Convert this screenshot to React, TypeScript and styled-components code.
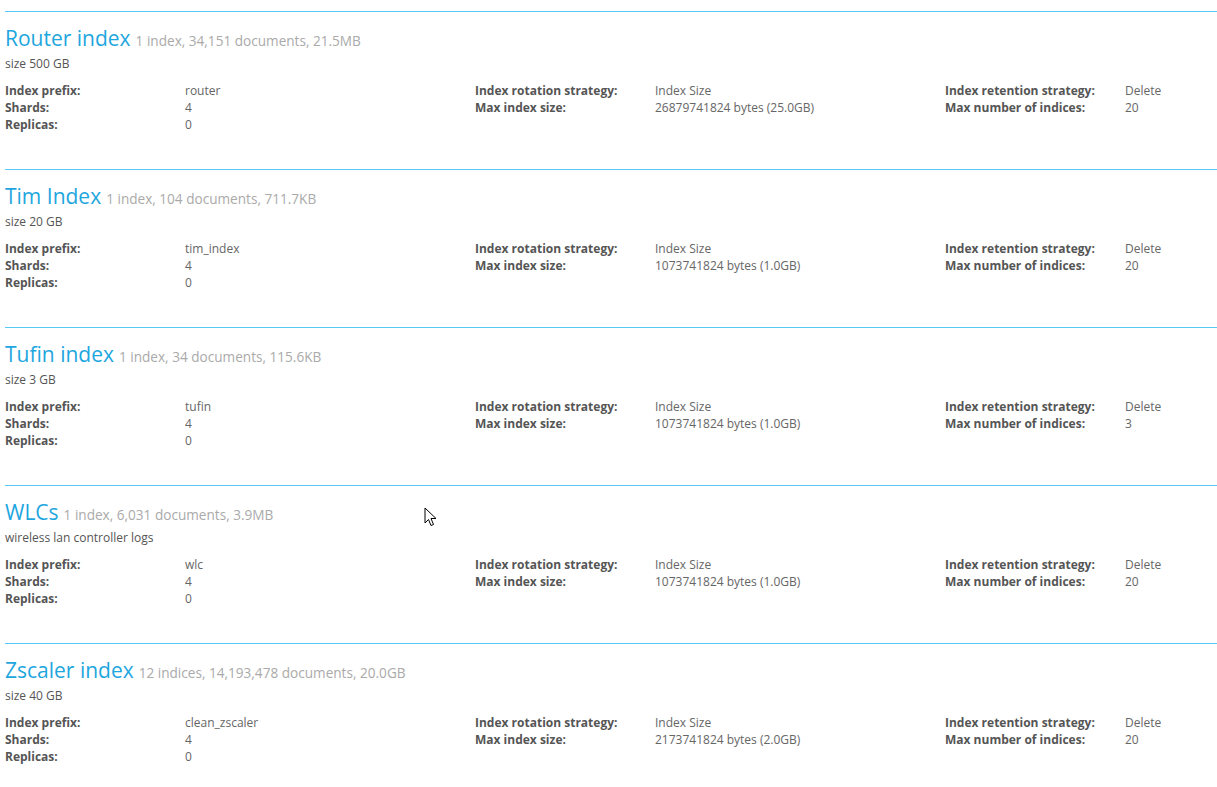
import React from 'react'
import styled, { createGlobalStyle } from 'styled-components'

type IndexSet = {
    title: string,
    stats: string,
    description: string,
    prefix: string,
    shards: number,
    replicas: number,
    maxSize: string,
    maxIndices: number,
}

const indexSets: IndexSet[] = [
    { title: 'Router index', stats: '1 index, 34,151 documents, 21.5MB', description: 'size 500 GB', prefix: 'router', shards: 4, replicas: 0, maxSize: '26879741824 bytes (25.0GB)', maxIndices: 20 },
    { title: 'Tim Index', stats: '1 index, 104 documents, 711.7KB', description: 'size 20 GB', prefix: 'tim_index', shards: 4, replicas: 0, maxSize: '1073741824 bytes (1.0GB)', maxIndices: 20 },
    { title: 'Tufin index', stats: '1 index, 34 documents, 115.6KB', description: 'size 3 GB', prefix: 'tufin', shards: 4, replicas: 0, maxSize: '1073741824 bytes (1.0GB)', maxIndices: 3 },
    { title: 'WLCs', stats: '1 index, 6,031 documents, 3.9MB', description: 'wireless lan controller logs', prefix: 'wlc', shards: 4, replicas: 0, maxSize: '1073741824 bytes (1.0GB)', maxIndices: 20 },
    { title: 'Zscaler index', stats: '12 indices, 14,193,478 documents, 20.0GB', description: 'size 40 GB', prefix: 'clean_zscaler', shards: 4, replicas: 0, maxSize: '2173741824 bytes (2.0GB)', maxIndices: 20 },
]

function App() {
    return (
        <Page>
            <GlobalStyle />
            {indexSets.map((set) => (
                <Section key={set.title}>
                    <Rule />
                    <Title>{set.title}<Stats>{set.stats}</Stats></Title>
                    <Description>{set.description}</Description>
                    <Columns>
                        <Column>
                            <Label>Index prefix:</Label><Value>{set.prefix}</Value>
                            <Label>Shards:</Label><Value>{set.shards}</Value>
                            <Label>Replicas:</Label><Value>{set.replicas}</Value>
                        </Column>
                        <Column>
                            <Label>Index rotation strategy:</Label><Value>Index Size</Value>
                            <Label>Max index size:</Label><Value>{set.maxSize}</Value>
                        </Column>
                        <Column>
                            <Label>Index retention strategy:</Label><Value>Delete</Value>
                            <Label>Max number of indices:</Label><Value>{set.maxIndices}</Value>
                        </Column>
                    </Columns>
                </Section>
            ))}
            <Cursor width="13" height="20" viewBox="0 0 13 20">
                <path d="M1 1 L1 16 L4.5 12.5 L7 18.5 L9.5 17.5 L7 11.5 L12 11.5 Z" fill="#fff" stroke="#000" strokeWidth="1" />
            </Cursor>
        </Page>
    )
}

const GlobalStyle = createGlobalStyle`
    body {
        margin: 0;
        background: #fff;
        font-family: "Open Sans", "Liberation Sans", sans-serif;
        overflow: hidden;
    }
`

const Page = styled.div`
    position: relative;
    padding: 11px 0 0 5px;
`

const Section = styled.section`
    padding-bottom: 36px;
`

const Rule = styled.div`
    height: 1px;
    background-color: #5ac8f5;
    margin-bottom: 13px;
`

const Title = styled.h2`
    display: flex;
    align-items: baseline;
    gap: 5px;
    height: 26px;
    margin: 0;
    font-size: 21px;
    font-weight: 400;
    line-height: 26px;
    color: #1ea6de;
    white-space: nowrap;
`

const Stats = styled.small`
    font-size: 13.6px;
    line-height: 26px;
    color: #aaaaaa;
`

const Description = styled.div`
    margin-top: 4px;
    font-size: 12px;
    line-height: 17px;
    color: #555;
`

const Columns = styled.div`
    display: flex;
    margin-top: 10px;
`

const Column = styled.dl`
    display: grid;
    grid-template-columns: 180px 290px;
    grid-template-rows: repeat(3, 17px);
    margin: 0;
    width: 470px;
    flex-shrink: 0;
    font-size: 12px;
    line-height: 17px;
    color: #555;
`

const Label = styled.dt`
    font-weight: 700;
`

const Value = styled.dd`
    margin: 0;
    color: #666;
`

const Cursor = styled.svg`
    position: absolute;
    left: 424px;
    top: 507px;
`

export default App
